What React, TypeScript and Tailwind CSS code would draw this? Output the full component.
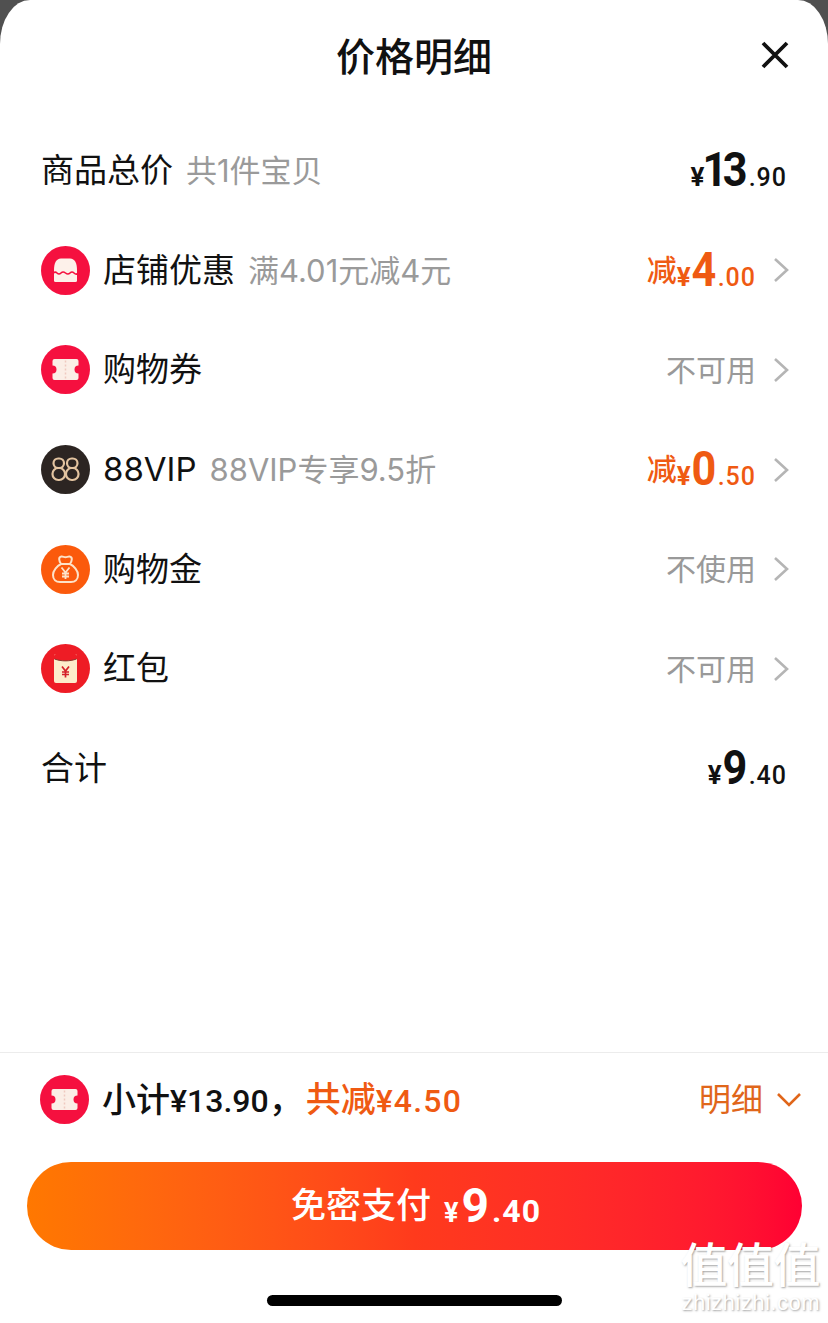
import { ReactNode } from "react";

const Chevron = () => (
  <svg width="18" height="26" viewBox="0 0 18 26" fill="none" className="ml-[16px] shrink-0">
    <path d="M3 2l12 11L3 24" stroke="#b5b5b5" strokeWidth="2.6" />
  </svg>
);

const ShopIcon = () => (
  <svg width="49" height="49" viewBox="0 0 49 49" fill="none">
    <circle cx="24.5" cy="24.5" r="24.5" fill="#f5103f" />
    <path d="M13 24c0-6.500 2-11.500 7-11.500h9c5 0 7 5 7 11.500v10.500a1.500 1.500 0 0 1-1.500 1.500h-20a1.500 1.500 0 0 1-1.500-1.500z" fill="#fdf1ea" />
    <path d="M12 27.500q2-2.500 4-.5t4 0 4.500 0 4.500 0 4 0 4 .5" stroke="#f5103f" strokeWidth="1.600" />
  </svg>
);

const TicketIcon = () => (
  <svg width="49" height="49" viewBox="0 0 49 49">
    <circle cx="24.5" cy="24.5" r="24.5" fill="#f5103f" />
    <path d="M13.500 14h22a2 2 0 0 1 2 2v4.500a4 4 0 0 0 0 8v4.500a2 2 0 0 1-2 2h-22a2 2 0 0 1-2-2v-4.500a4 4 0 0 0 0-8V16a2 2 0 0 1 2-2z" fill="#fbeee6" />
    <path d="M24.500 15.500v18" stroke="#efc9c0" strokeWidth="1.500" strokeDasharray="2 2" />
  </svg>
);

const VipIcon = () => (
  <svg width="49" height="49" viewBox="0 0 49 49" fill="none">
    <circle cx="24.5" cy="24.5" r="24.5" fill="#2c2522" />
    <g stroke="#e3c4a0" strokeWidth="2.200">
      <rect x="12.500" y="13.500" width="10.500" height="9.500" rx="4.700" />
      <rect x="11.500" y="23" width="12.500" height="12" rx="5.800" />
      <rect x="26" y="13.500" width="10.500" height="9.500" rx="4.700" />
      <rect x="25" y="23" width="12.500" height="12" rx="5.800" />
    </g>
  </svg>
);

const BagIcon = () => (
  <svg width="49" height="49" viewBox="0 0 49 49" fill="none">
    <circle cx="24.5" cy="24.5" r="24.5" fill="#fb5a0c" />
    <path d="M20 19c-2-3-3-7 .5-7.500 1.500-.2 2.500.8 4 .8s2.500-1 4-.8c3.500.5 2.500 4.500.5 7.500 4 2 8 6.500 8 11 0 4.500-3 7-7 7H19c-4 0-7-2.500-7-7 0-4.500 4-9 8-11z" stroke="#fde2c8" strokeWidth="2" />
    <path d="M20 19h9" stroke="#fde2c8" strokeWidth="2" />
    <path d="M20.500 22.500l4 5 4-5M24.500 27.500v6.500M21 28.500h7M21 31.500h7" stroke="#fde2c8" strokeWidth="1.800" />
  </svg>
);

const PacketIcon = () => (
  <svg width="49" height="49" viewBox="0 0 49 49" fill="none">
    <circle cx="24.5" cy="24.5" r="24.5" fill="#ee1c25" />
    <rect x="13" y="10" width="23" height="29" rx="2" fill="#fdeccb" />
    <path d="M13 12a2 2 0 0 1 2-2h19a2 2 0 0 1 2 2v3c-7 2.500-16 2.500-23 0z" fill="#ee1c25" />
    <path d="M13.500 15c7 2.500 15 2.500 22 0" stroke="#8a3a30" strokeWidth="1" />
    <path d="M21 22.500l3.500 4.500 3.500-4.500M24.500 27v6.500M21 28h7M21 30.500h7" stroke="#d4202a" strokeWidth="1.700" />
  </svg>
);

function Amount({ whole, cents, color = "text-[#111]" }: { whole: string; cents: string; color?: string }) {
  return (
    <span className={`flex items-baseline pb-[1px] font-['Roboto',sans-serif] font-bold ${color}`}>
      <span className="text-[26px] leading-none">¥</span>
      <span
        className={`text-[48px] leading-none scale-x-90 origin-right ${
          whole.length > 1 ? "-ml-[7px] mr-[3px] tracking-[-5px]" : "-ml-[2px] tracking-[-1.5px]"
        }`}
      >
        {whole}
      </span>
      <span className="ml-[3px] text-[25px] leading-none tracking-[1px] font-medium">.{cents}</span>
    </span>
  );
}

function Row({ icon, label, note, right, chevron }: { icon?: ReactNode; label: string; note?: string; right: ReactNode; chevron?: boolean }) {
  return (
    <div className={`h-[99.6px] flex items-center pl-[41px] ${chevron ? "pr-[38px]" : "pr-[41px]"}`}>
      {icon && <span className="mr-[13px] flex shrink-0">{icon}</span>}
      <span className="text-[33px] leading-none text-[#111]">{label}</span>
      {note && <span className="ml-[13px] text-[31px] leading-none text-[#9a9a9a]">{note}</span>}
      <span className="ml-auto flex items-center">
        {right}
        {chevron && <Chevron />}
      </span>
    </div>
  );
}

const Off = ({ whole, cents }: { whole: string; cents: string }) => (
  <span className="flex items-baseline text-[#ef5a12]">
    <span className="-translate-y-[5px] text-[30px] leading-none font-medium">减</span>
    <Amount whole={whole} cents={cents} color="text-[#ef5a12]" />
  </span>
);

const Muted = ({ children }: { children: string }) => (
  <span className="text-[30px] leading-none text-[#999]">{children}</span>
);

export default function App() {
  return (
    <div className="relative h-[1323px] w-[828px] overflow-hidden bg-[#505050] font-['Inter','Noto_Sans_CJK_SC',sans-serif]">
      <div className="flex h-full flex-col [border-radius:30px_30px_0_0/44px_44px_0_0] bg-white">
        <header className="relative h-[121px] pt-[33px] text-center text-[39px] font-medium leading-[48px] text-[#111]">
          价格明细
          <svg width="30" height="30" viewBox="0 0 30 30" className="absolute right-[38px] top-[40px]">
            <path d="M3 3l24 24M27 3L3 27" stroke="#111" strokeWidth="3.800" />
          </svg>
        </header>

        <Row label="商品总价" note="共1件宝贝" right={<Amount whole="13" cents="90" />} />
        <Row icon={<ShopIcon />} label="店铺优惠" note="满4.01元减4元" right={<Off whole="4" cents="00" />} chevron />
        <Row icon={<TicketIcon />} label="购物券" right={<Muted>不可用</Muted>} chevron />
        <Row icon={<VipIcon />} label="88VIP" note="88VIP专享9.5折" right={<Off whole="0" cents="50" />} chevron />
        <Row icon={<BagIcon />} label="购物金" right={<Muted>不使用</Muted>} chevron />
        <Row icon={<PacketIcon />} label="红包" right={<Muted>不可用</Muted>} chevron />
        <Row label="合计" right={<Amount whole="9" cents="40" />} />

        <div className="flex-1" />

        <footer className="border-t border-[#ececec]">
          <div className="flex h-[109px] items-center pb-[16px] pl-[40px] pr-[26px]">
            <TicketIcon />
            <span className="ml-[13px] flex items-baseline text-[34px] font-medium leading-none text-[#111]">
              小计
              <span className="font-['Roboto',sans-serif] text-[32px]">¥13.90</span>
              ，
            </span>
            <span className="ml-[3px] flex items-baseline text-[35px] font-medium leading-none text-[#ef5a12]">
              共减
              <span className="font-['Roboto',sans-serif] text-[32px] tracking-[1.200px]">¥4.50</span>
            </span>
            <span className="ml-auto flex items-center text-[32px] leading-none text-[#e0661a]">
              明细
              <svg width="26" height="16" viewBox="0 0 26 16" fill="none" className="ml-[13px]">
                <path d="M2 2l11 11L24 2" stroke="#e0661a" strokeWidth="2.600" />
              </svg>
            </span>
          </div>
          <div className="px-[27px]">
            <button className="flex h-[88px] w-[775px] items-center justify-center rounded-full bg-gradient-to-r from-[#ff7800] via-[#ff3a1c] via-50% to-[#ff0033] pl-[3px] text-white">
              <span className="pb-[2px] text-[35px] font-medium leading-none">免密支付</span>
              <span className="ml-[13px] flex items-baseline font-['Roboto',sans-serif] font-bold">
                <span className="text-[27px] leading-none mr-[3px]">¥</span>
                <span className="text-[48px] leading-none">9</span>
                <span className="ml-[3px] text-[32px] leading-none tracking-[1px] font-bold">.40</span>
              </span>
            </button>
          </div>
          <div className="flex h-[73px] justify-center pt-[45px]">
            <div className="h-[11px] w-[295px] rounded-full bg-black" />
          </div>
        </footer>
      </div>

      <div className="pointer-events-none absolute right-[8px] top-[1240px] text-right text-white [text-shadow:1px_1px_2px_rgba(90,90,90,0.55)]">
        <div className="text-[47px] font-medium leading-[50px] tracking-[-0.5px]">值值值</div>
        <div className="font-['Liberation_Sans',sans-serif] text-[22px] leading-[26px] tracking-[0.5px]">zhizhizhi.com</div>
      </div>
    </div>
  );
}
